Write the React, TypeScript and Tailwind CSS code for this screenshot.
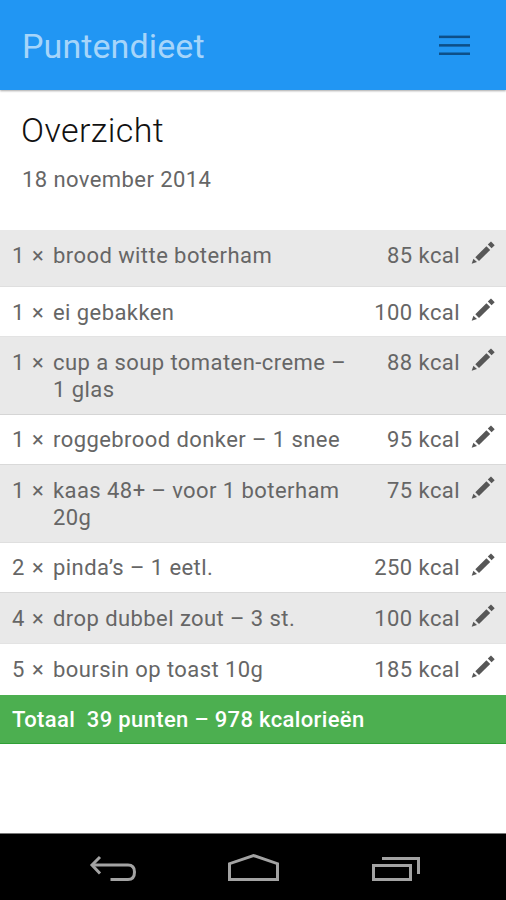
interface Item {
  amount: number;
  name: string;
  kcal: number;
  row: string;
}

const items: Item[] = [
  { amount: 1, name: "brood witte boterham", kcal: 85, row: "h-[57px] pt-[11px] bg-[#e9e9e9] border-y border-t-[#e9e9e9] border-b-[#dfdfdf]" },
  { amount: 1, name: "ei gebakken", kcal: 100, row: "h-[49px] pt-3 bg-white" },
  { amount: 1, name: "cup a soup tomaten-creme – 1 glas", kcal: 88, row: "h-[79px] pt-3 bg-[#e9e9e9] border-y border-t-[#e3e3e3] border-b-[#d5d5d5]" },
  { amount: 1, name: "roggebrood donker – 1 snee", kcal: 95, row: "h-[49px] pt-[11px] bg-white" },
  { amount: 1, name: "kaas 48+ – voor 1 boterham 20g", kcal: 75, row: "h-[79px] pt-3 bg-[#e9e9e9] border-y border-t-[#d9d9d9] border-b-[#dfdfdf]" },
  { amount: 2, name: "pinda’s – 1 eetl.", kcal: 250, row: "h-[49px] pt-[11px] bg-white" },
  { amount: 4, name: "drop dubbel zout – 3 st.", kcal: 100, row: "h-[52px] pt-3 bg-[#e9e9e9] border-y border-t-[#d9d9d9] border-b-[#e3e3e3]" },
  { amount: 5, name: "boursin op toast 10g", kcal: 185, row: "h-[51px] pt-3 bg-white" },
];

const Pencil = () => (
  <svg className="-mt-px ml-[11px] h-6 w-6 shrink-0" viewBox="0 0 24 24" fill="#575757">
    <path d="M.7 22.7 L2.4 17.800 L6 21.100 Z" />
    <path d="M4.300 16.200 L15.400 5.200 L19.200 8.900 L8 20 Z" />
    <path d="M16.800 3.600 L20 .5 L23.700 4.200 L20.600 7.300 Z" />
  </svg>
);

const MenuIcon = () => (
  <svg className="h-5 w-[31px]" viewBox="0 0 31 20" fill="#0d4f88">
    <rect y=".6" width="31" height="2.5" />
    <rect y="9.1" width="31" height="2.5" />
    <rect y="17.5" width="31" height="2.5" />
  </svg>
);

const Row = ({ item }: { item: Item }) => (
  <div className={`flex items-start pl-3 pr-[11px] ${item.row}`}>
    <span className="w-5">{item.amount}</span>
    <span className="w-[21px]">×</span>
    <span className="w-[300px]">{item.name}</span>
    <span className="flex-1 text-right whitespace-nowrap">{item.kcal} kcal</span>
    <Pencil />
  </div>
);

const NavBar = () => (
  <nav className="mt-auto h-[67px] border-t border-[#777] bg-black">
    <svg className="h-[66px] w-full" viewBox="0 834 506 66" fill="none" stroke="#a3a3a3" strokeWidth="3">
      <path d="M92 865 H128 Q134.500 865 134.500 872 Q134.500 879.500 128 879.500 H110.500" />
      <path d="M100 857 L92 865 L100 873.500" />
      <path d="M229.500 879.500 V863.700 L253.500 855.500 L277.500 863.700 V879.500 Z" />
      <path d="M373.500 865.500 H410.500 V879.500 H373.500 Z" />
      <path d="M382 858.500 H418.500 V874" />
    </svg>
  </nav>
);

const App = () => {
  return (
    <div className="flex h-[900px] w-[506px] flex-col overflow-hidden bg-white font-['Roboto',sans-serif] text-[#666]">
      <header className="flex h-[90px] shrink-0 items-center justify-between bg-[#2196f3] pl-[22px] pr-9 shadow-[0_1px_2px_rgba(0,0,0,0.35)]">
        <h1 className="pt-0.5 text-[34px] leading-10 tracking-[0.1px] text-[#a6d5fa]">Puntendieet</h1>
        <button>
          <MenuIcon />
        </button>
      </header>
      <div className="h-[140px] shrink-0 pl-[21px] pt-5">
        <h2 className="text-[34px] font-light leading-10 tracking-[0.4px] text-[#111]">Overzicht</h2>
        <p className="mt-4 pl-px text-[22px] leading-7 tracking-[0.42px]">18 november 2014</p>
      </div>
      <main className="text-[22px] leading-[27px] tracking-[0.43px]">
        {items.map((item) => (
          <Row key={item.name} item={item} />
        ))}
        <div className="h-[49px] whitespace-pre border-b border-[#2fa036] bg-[#4caf50] pl-3 pt-[11px] font-medium tracking-[0.35px] text-white">
          {"Totaal  39 punten – 978 kcalorieën"}
        </div>
      </main>
      <NavBar />
    </div>
  );
};

export default App;
